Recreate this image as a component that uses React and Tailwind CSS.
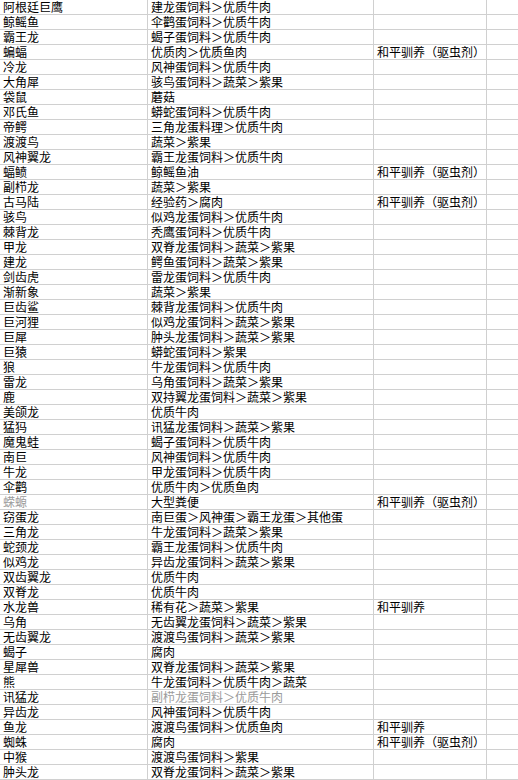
const rows = [
  ['阿根廷巨鹰', '建龙蛋饲料>优质牛肉', ''],
  ['鲸鳐鱼', '伞鹳蛋饲料>优质牛肉', ''],
  ['霸王龙', '蝎子蛋饲料>优质牛肉', ''],
  ['蝙蝠', '优质肉>优质鱼肉', '和平驯养（驱虫剂）'],
  ['冷龙', '风神蛋饲料>优质牛肉', ''],
  ['大角犀', '骇鸟蛋饲料>蔬菜>紫果', ''],
  ['袋鼠', '蘑菇', ''],
  ['邓氏鱼', '蟒蛇蛋饲料>优质牛肉', ''],
  ['帝鳄', '三角龙蛋料理>优质牛肉', ''],
  ['渡渡鸟', '蔬菜>紫果', ''],
  ['风神翼龙', '霸王龙蛋饲料>优质牛肉', ''],
  ['蝠鲼', '鲸鳐鱼油', '和平驯养（驱虫剂）'],
  ['副栉龙', '蔬菜>紫果', ''],
  ['古马陆', '经验药>腐肉', '和平驯养（驱虫剂）'],
  ['骇鸟', '似鸡龙蛋饲料>优质牛肉', ''],
  ['棘背龙', '秃鹰蛋饲料>优质牛肉', ''],
  ['甲龙', '双脊龙蛋饲料>蔬菜>紫果', ''],
  ['建龙', '鳄鱼蛋饲料>蔬菜>紫果', ''],
  ['剑齿虎', '雷龙蛋饲料>优质牛肉', ''],
  ['渐新象', '蔬菜>紫果', ''],
  ['巨齿鲨', '棘背龙蛋饲料>优质牛肉', ''],
  ['巨河狸', '似鸡龙蛋饲料>蔬菜>紫果', ''],
  ['巨犀', '肿头龙蛋饲料>蔬菜>紫果', ''],
  ['巨猿', '蟒蛇蛋饲料>紫果', ''],
  ['狼', '牛龙蛋饲料>优质牛肉', ''],
  ['雷龙', '乌角蛋饲料>蔬菜>紫果', ''],
  ['鹿', '双持翼龙蛋饲料>蔬菜>紫果', ''],
  ['美颌龙', '优质牛肉', ''],
  ['猛犸', '讯猛龙蛋饲料>蔬菜>紫果', ''],
  ['魔鬼蛙', '蝎子蛋饲料>优质牛肉', ''],
  ['南巨', '风神蛋饲料>优质牛肉', ''],
  ['牛龙', '甲龙蛋饲料>优质牛肉', ''],
  ['伞鹳', '优质牛肉>优质鱼肉', ''],
  ['蝾螈', '大型粪便', '和平驯养（驱虫剂）', 'name'],
  ['窃蛋龙', '南巨蛋>风神蛋>霸王龙蛋>其他蛋', ''],
  ['三角龙', '牛龙蛋饲料>蔬菜>紫果', ''],
  ['蛇颈龙', '霸王龙蛋饲料>优质牛肉', ''],
  ['似鸡龙', '异齿龙蛋饲料>蔬菜>紫果', ''],
  ['双齿翼龙', '优质牛肉', ''],
  ['双脊龙', '优质牛肉', ''],
  ['水龙兽', '稀有花>蔬菜>紫果', '和平驯养'],
  ['乌角', '无齿翼龙蛋饲料>蔬菜>紫果', ''],
  ['无齿翼龙', '渡渡鸟蛋饲料>蔬菜>紫果', ''],
  ['蝎子', '腐肉', ''],
  ['星犀兽', '双脊龙蛋饲料>蔬菜>紫果', ''],
  ['熊', '牛龙蛋饲料>优质牛肉>蔬菜', ''],
  ['讯猛龙', '副栉龙蛋饲料>优质牛肉', '', 'food'],
  ['异齿龙', '风神蛋饲料>优质牛肉', ''],
  ['鱼龙', '渡渡鸟蛋饲料>优质鱼肉', '和平驯养'],
  ['蜘蛛', '腐肉', '和平驯养（驱虫剂）'],
  ['中猴', '渡渡鸟蛋饲料>紫果', ''],
  ['肿头龙', '双脊龙蛋饲料>蔬菜>紫果', ''],
];

// spreadsheet uses full-width arrows
const fw = (s) => s.replace(/>/g, '＞');

function Cell({ text, width, faint }) {
  return (
    <div
      className={`${width} h-[15px] shrink-0 border-r border-b border-[#d0d0d0] pl-[3px] flex items-end whitespace-nowrap leading-[14px] ${faint ? 'text-[#9a9a9a]' : 'text-black'}`}
    >
      {fw(text)}
    </div>
  );
}

export default function App() {
  return (
    <div
      className="w-[518px] h-[780px] overflow-hidden bg-white text-[12px]"
      style={{ fontFamily: '"Noto Sans CJK SC", "Noto Sans", sans-serif' }}
    >
      {rows.map((r, i) => (
        <div key={i} className="flex">
          <Cell text={r[0]} width="w-[148px]" faint={r[3] === 'name'} />
          <Cell text={r[1]} width="w-[226px]" faint={r[3] === 'food'} />
          <Cell text={r[2]} width="w-[113px]" />
          <div className="flex-1 h-[15px] border-b border-[#d0d0d0]" />
        </div>
      ))}
    </div>
  );
}
